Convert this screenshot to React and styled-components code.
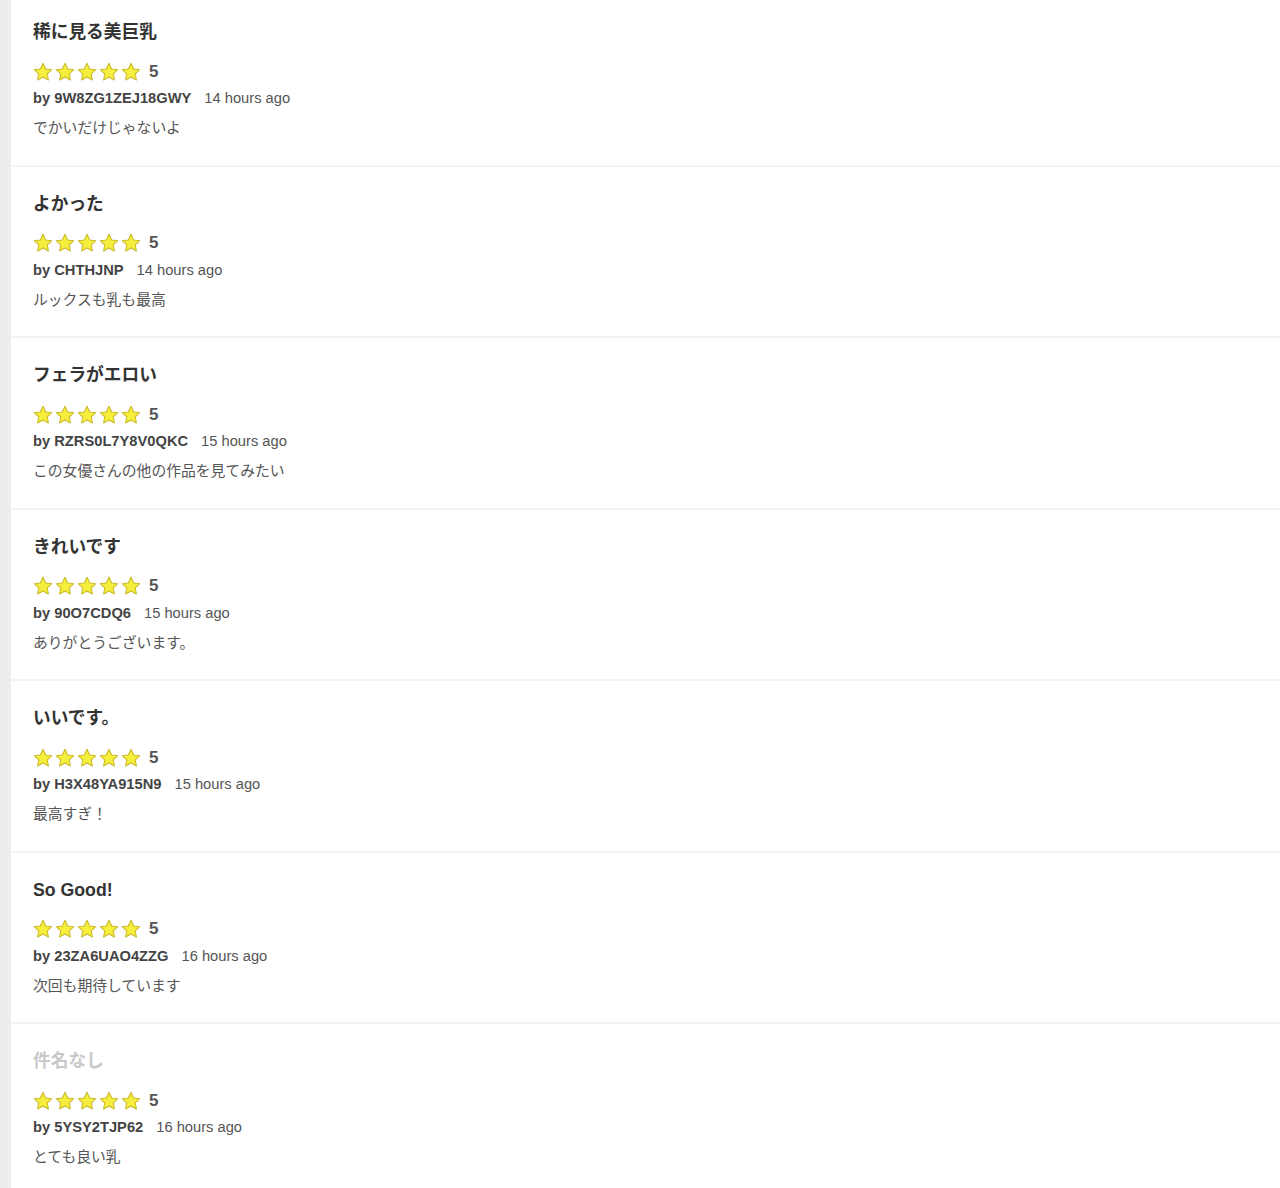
import React from "react";
import styled, { createGlobalStyle } from "styled-components";

const GlobalStyle = createGlobalStyle`
  body {
    margin: 0;
    background: #fff;
    font-family: "Liberation Sans", Arial, "Noto Sans CJK JP", sans-serif;
  }
`;

const reviews = [
  { title: "稀に見る美巨乳", user: "9W8ZG1ZEJ18GWY", time: "14 hours ago", body: "でかいだけじゃないよ" },
  { title: "よかった", user: "CHTHJNP", time: "14 hours ago", body: "ルックスも乳も最高" },
  { title: "フェラがエロい", user: "RZRS0L7Y8V0QKC", time: "15 hours ago", body: "この女優さんの他の作品を見てみたい" },
  { title: "きれいです", user: "90O7CDQ6", time: "15 hours ago", body: "ありがとうございます。" },
  { title: "いいです。", user: "H3X48YA915N9", time: "15 hours ago", body: "最高すぎ！" },
  { title: "So Good!", user: "23ZA6UAO4ZZG", time: "16 hours ago", body: "次回も期待しています" },
  { title: "", user: "5YSY2TJP62", time: "16 hours ago", body: "とても良い乳" },
];

function Star() {
  return (
    <svg width="20" height="20" viewBox="0 0 24 24">
      <path
        d="M12 1.5l3.2 6.8 7.3.9-5.4 5.1 1.4 7.3L12 18l-6.5 3.6 1.4-7.3-5.4-5.1 7.3-.9z"
        fill="#f6ee3c"
        stroke="#c9ba2a"
        strokeWidth="1.3"
        strokeLinejoin="round"
      />
    </svg>
  );
}

function App() {
  return (
    <>
      <GlobalStyle />
      <Page>
        <List>
          {reviews.map((r, i) => (
            <Item key={i}>
              <Title $empty={!r.title}>{r.title || "件名なし"}</Title>
              <Rating>
                <Stars>
                  {[0, 1, 2, 3, 4].map((s) => (
                    <Star key={s} />
                  ))}
                </Stars>
                <Score>5</Score>
              </Rating>
              <Meta>
                <User>by {r.user}</User>
                <Time>{r.time}</Time>
              </Meta>
              <Body>{r.body}</Body>
            </Item>
          ))}
        </List>
      </Page>
    </>
  );
}

const Page = styled.div`
  min-height: 1188px;
  border-left: 11px solid #ededed;
  overflow: hidden;
`;

const List = styled.ul`
  list-style: none;
  margin: -5px 0 0;
  padding: 0;
`;

const Item = styled.li`
  height: 171.5px;
  box-sizing: border-box;
  padding: 24px 22px 0;
  border-bottom: 2px solid #f3f3f3;
`;

const Title = styled.h3`
  margin: 0;
  font-size: 17.7px;
  line-height: 26px;
  font-weight: bold;
  color: ${(p) => (p.$empty ? "#c8c8c8" : "#333")};
`;

const Rating = styled.div`
  display: flex;
  align-items: center;
  margin-top: 16px;
  height: 21px;
`;

const Stars = styled.div`
  display: flex;
  gap: 2px;
  svg {
    display: block;
  }
`;

const Score = styled.span`
  margin-left: 8px;
  font-size: 17px;
  font-weight: bold;
  color: #555;
`;

const Meta = styled.div`
  display: flex;
  align-items: baseline;
  gap: 13px;
  margin-top: 5px;
  font-size: 14.7px;
  line-height: 22px;
`;

const User = styled.span`
  font-weight: bold;
  color: #444;
`;

const Time = styled.span`
  color: #555;
`;

const Body = styled.p`
  margin: 8px 0 0;
  font-size: 14.8px;
  line-height: 22px;
  color: #555;
`;

export default App;
